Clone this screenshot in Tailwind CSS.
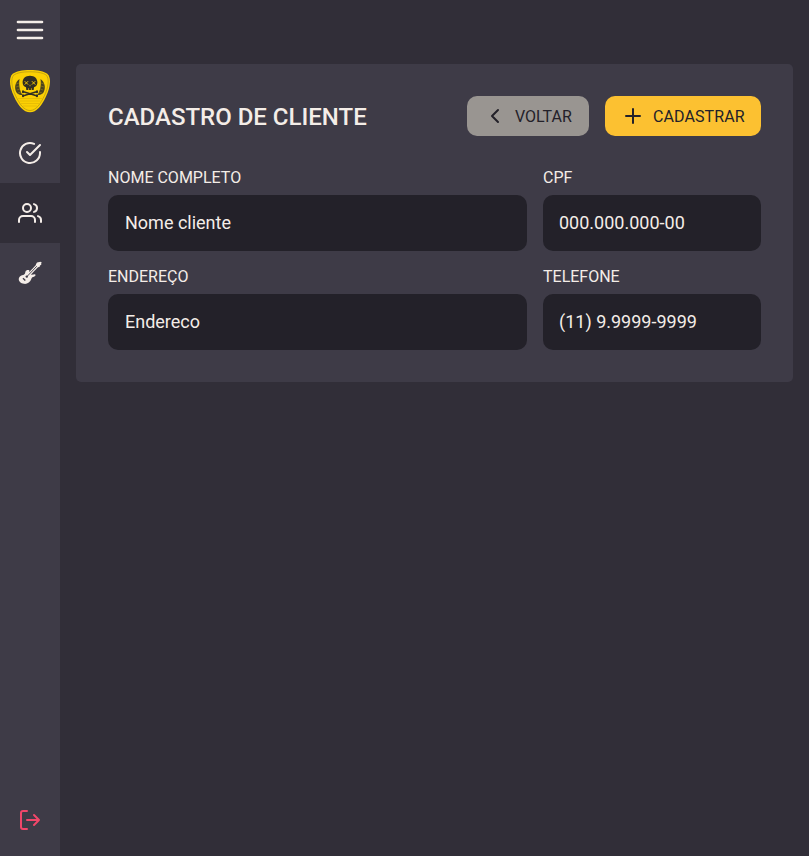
<!DOCTYPE html>
<html lang="pt-BR">
<head>
<meta charset="utf-8">
<title>Cadastro de cliente</title>
<script src="https://cdn.jsdelivr.net/npm/@tailwindcss/browser@4"></script>
</head>
<body class="flex min-h-screen bg-[#312e38] font-['Roboto',sans-serif] text-[#f4ede8]">
<aside class="flex h-screen w-[60px] shrink-0 flex-col items-center bg-[#3e3b47]">
  <button class="grid h-[60px] w-full place-items-center" aria-label="Menu">
    <svg class="size-8" viewBox="0 0 24 24" fill="none" stroke="currentColor" stroke-width="2" stroke-linecap="round"><path d="M3 12h18M3 6h18M3 18h18"/></svg>
  </button>
  <div class="grid h-[63px] w-full place-items-center">
    <svg class="h-[43px] w-10" viewBox="0 0 40 43" fill="none">
      <path d="M20 0C28 0 34 1.300 37.300 3.800C41.500 7.500 40.500 17 36 26.500C31.500 36 26.500 42.300 20 42.300S8.500 36 4 26.500C-.5 17-1.500 7.500 2.700 3.800C6 1.300 12 0 20 0Z" fill="#fbd003"/>
      <path d="M20 1.800C28 1.800 33.500 3 36.300 5.200C39.500 8.500 38.500 17 34.500 25.500C30.500 34 26 40.500 20 40.500S9.500 34 5.500 25.500C1.500 17 .5 8.500 3.700 5.200C6.500 3 12 1.800 20 1.800Z" stroke="#a58c17" stroke-width=".6"/>
      <path d="M9.500 9C5 12 4 18 6.500 22.500C8 24.500 10 25 12.500 25C10 21 8.500 16 9.500 9ZM30.500 9C35 12 36 18 33.500 22.500C32 24.500 30 25 27.500 25C30 21 31.500 16 30.500 9Z" fill="#4a421f"/>
      <path d="M9 13l-3 1m3.200 2-3.200 1m4 2-3.200 1m4.200 2-3 1M31 13l3 1m-3.200 2 3.200 1m-4 2 3.200 1m-4.200 2 3 1" stroke="#a58c17" stroke-width=".5"/>
      <path d="M20 5.700C15.500 5.700 12.600 8.500 12.600 12.200C12.600 14.800 13.700 16.500 16 17.200L16.300 20H23.700L24 17.200C26.300 16.500 27.400 14.800 27.400 12.200C27.400 8.500 24.500 5.700 20 5.700Z" fill="#302d23"/>
      <path d="m14.700 11.200 3.400 3.400m0-3.400-3.400 3.400m7.200-3.400 3.400 3.400m0-3.400-3.400 3.400" stroke="#f0c506" stroke-width="1"/>
      <path d="M20 14.800v1.500M18.600 18.200V20m2.800-1.800V20" stroke="#f0c506" stroke-width=".7"/>
      <path d="m13.500 21.700 13 4M26.500 21.700l-13 4" stroke="#302d23" stroke-width="1.600" stroke-linecap="round"/>
      <path d="M13 21.200v1M27 21.200v1M13 25.200v1M27 25.200v1" stroke="#302d23" stroke-width="2" stroke-linecap="round"/>
      <path d="M8 28.500h24M9.500 31h21M11 33.500h18M13 36h14" stroke="#e0b606" stroke-width=".7"/>
    </svg>
  </div>
  <nav class="w-full">
    <a class="grid h-[60px] place-items-center" aria-label="Ordens">
      <svg class="size-6" viewBox="0 0 24 24" fill="none" stroke="currentColor" stroke-width="2" stroke-linecap="round" stroke-linejoin="round"><path d="M22 11.080V12a10 10 0 1 1-5.930-9.140"/><path d="M22 4 12 14.010l-3-3"/></svg>
    </a>
    <a class="grid h-[60px] place-items-center bg-[#312e38]" aria-label="Clientes">
      <svg class="size-6" viewBox="0 0 24 24" fill="none" stroke="currentColor" stroke-width="2" stroke-linecap="round" stroke-linejoin="round"><path d="M17 21v-2a4 4 0 0 0-4-4H5a4 4 0 0 0-4 4v2"/><circle cx="9" cy="7" r="4"/><path d="M23 21v-2a4 4 0 0 0-3-3.870M16 3.130a4 4 0 0 1 0 7.750"/></svg>
    </a>
    <a class="grid h-[60px] place-items-center" aria-label="Instrumentos">
      <svg class="size-6" viewBox="0 0 24 24" fill="none">
        <path d="M17.800 3.500 19 1.500 22.500.7 23.900 1.800 23 2.700 23.400 3.700 22 4.500 21.500 5.900 19.500 6.200Z" fill="currentColor"/>
        <path d="M7.500 10.500C8 9.200 9.800 8.600 11.300 9.300L11.300 11.500 13.500 13.800 17 13.300C18 14 17.500 15 16.300 15.600C14.800 16.200 13.700 16.500 13.300 18C12.300 21.300 9 23.300 6 22.800C2.800 22.500.4 20.200.8 17.500C1.300 15 3.500 14.400 5.300 14C7.400 13.200 7 12 7.500 10.500Z" fill="currentColor"/>
        <path d="m11 13.500 8.500-9" stroke="currentColor" stroke-width="3"/>
        <path d="m9.300 15.200 9.500-10" stroke="#3e3b47" stroke-width=".9"/>
        <circle cx="8.800" cy="15.600" r="1.200" fill="#3e3b47"/>
        <path d="m5 17.200 2.300 2.200" stroke="#3e3b47" stroke-width="1.400"/>
      </svg>
    </a>
  </nav>
  <button class="mt-auto mb-6 text-[#f0476a]" aria-label="Sair">
    <svg class="size-6" viewBox="0 0 24 24" fill="none" stroke="currentColor" stroke-width="2" stroke-linecap="round" stroke-linejoin="round"><path d="M9 21H5a2 2 0 0 1-2-2V5a2 2 0 0 1 2-2h4M16 17l5-5-5-5M21 12H9"/></svg>
  </button>
</aside>
<main class="flex-1 px-4 pt-16">
  <form class="rounded-[5px] bg-[#3e3b47] p-8">
    <header class="flex h-10 items-center justify-between">
      <h1 class="pt-0.5 text-2xl font-medium whitespace-nowrap">CADASTRO DE CLIENTE</h1>
      <div class="flex gap-4 text-[#232129]">
        <button type="button" class="flex h-10 w-[122px] items-center gap-2 rounded-[10px] bg-[#999591] pl-4">
          <svg class="size-6" viewBox="0 0 24 24" fill="none" stroke="currentColor" stroke-width="2" stroke-linecap="round" stroke-linejoin="round"><path d="m15 18-6-6 6-6"/></svg>
          <span class="pt-0.5">VOLTAR</span>
        </button>
        <button type="button" class="flex h-10 w-[156px] items-center gap-2 rounded-[10px] bg-[#fcc131] pl-4">
          <svg class="size-6" viewBox="0 0 24 24" fill="none" stroke="currentColor" stroke-width="2" stroke-linecap="round"><path d="M12 5v14M5 12h14"/></svg>
          <span class="pt-0.5 tracking-[0.1px]">CADASTRAR</span>
        </button>
      </div>
    </header>
    <div class="mt-8 grid grid-cols-[1fr_218px] gap-4">
      <label class="flex flex-col gap-2"><span class="leading-[19px]">NOME COMPLETO</span>
        <input class="h-14 w-full rounded-[10px] bg-[#232129] pr-4 pb-0.5 pl-[17px] text-lg placeholder:text-[#f4ede8]" placeholder="Nome cliente"></label>
      <label class="flex flex-col gap-2"><span class="leading-[19px]">CPF</span>
        <input class="h-14 w-full rounded-[10px] bg-[#232129] px-4 pb-0.5 text-lg placeholder:text-[#f4ede8]" placeholder="000.000.000-00"></label>
      <label class="flex flex-col gap-2"><span class="leading-[19px]">ENDEREÇO</span>
        <input class="h-14 w-full rounded-[10px] bg-[#232129] pr-4 pb-0.5 pl-[17px] text-lg placeholder:text-[#f4ede8]" placeholder="Endereco"></label>
      <label class="flex flex-col gap-2"><span class="leading-[19px]">TELEFONE</span>
        <input class="h-14 w-full rounded-[10px] bg-[#232129] px-4 pb-0.5 text-lg placeholder:text-[#f4ede8]" placeholder="(11) 9.9999-9999"></label>
    </div>
  </form>
</main>
</body>
</html>
